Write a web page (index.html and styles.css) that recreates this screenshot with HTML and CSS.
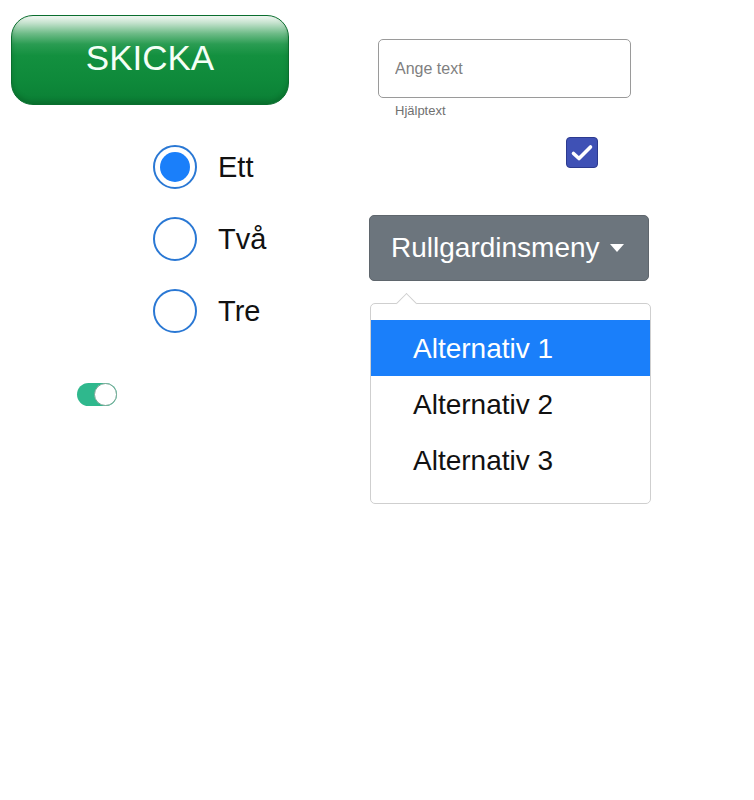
FILE: index.html
```html
<!DOCTYPE html>
<html lang="sv">

<head>
    <meta charset="UTF-8">
    <meta name="viewport" content="width=device-width, initial-scale=1.0">
    <title>Formulärkontroller</title>
    <link rel="stylesheet" href="styles.css">
</head>

<body>
    <div class="page">
        <!-- Left column: button, radios, switch -->
        <div class="col-left">
            <button class="send-btn">SKICKA</button>

            <div class="radio-group">
                <label class="radio-row">
                    <span class="radio checked"></span>
                    <span class="radio-label">Ett</span>
                </label>
                <label class="radio-row">
                    <span class="radio"></span>
                    <span class="radio-label">Två</span>
                </label>
                <label class="radio-row">
                    <span class="radio"></span>
                    <span class="radio-label">Tre</span>
                </label>
            </div>

            <div class="switch on">
                <span class="knob"></span>
            </div>
        </div>

        <!-- Right column: text field, checkbox, dropdown -->
        <div class="col-right">
            <div class="field">
                <input type="text" class="text-input" placeholder="Ange text">
                <div class="helper">Hjälptext</div>
            </div>

            <div class="check-wrap">
                <span class="checkbox">
                    <svg width="24" height="20" viewBox="0 0 24 20">
                        <path d="M3.5 10.5 L9 15.5 L20.5 4" fill="none" stroke="#fff" stroke-width="3.6" stroke-linecap="round" stroke-linejoin="round"/>
                    </svg>
                </span>
            </div>

            <button class="dropdown-btn">
                <span>Rullgardinsmeny</span>
                <span class="caret"></span>
            </button>

            <div class="dropdown-menu">
                <div class="menu-item active">Alternativ 1</div>
                <div class="menu-item">Alternativ 2</div>
                <div class="menu-item">Alternativ 3</div>
            </div>
        </div>
    </div>
</body>

</html>
```

FILE: styles.css
```css
body {
    font-family: "Liberation Sans", Arial, sans-serif;
    margin: 0;
    padding: 0;
    background-color: #ffffff;
    color: #111111;
}

.page {
    display: grid;
    grid-template-columns: 369px 1fr;
}

/* Left column */

.col-left {
    display: flex;
    flex-direction: column;
    align-items: flex-start;
}

.send-btn {
    margin: 15px 0 0 11px;
    width: 278px;
    height: 90px;
    border: 1px solid #0a6e2e;
    border-radius: 22px;
    background: linear-gradient(to bottom, #f2f8f3 0%, #c4e2cd 8%, #6dbb87 20%, #2a9c52 32%, #13903f 45%, #0e893a 75%, #0b7f35 100%);
    box-shadow: inset 0 -3px 4px rgba(0, 60, 20, 0.25);
    color: #f4fff6;
    font-family: "Liberation Sans", Arial, sans-serif;
    font-size: 35px;
    padding: 0 0 4px 0;
    cursor: pointer;
}

.radio-group {
    display: flex;
    flex-direction: column;
    gap: 28px;
    margin: 40px 0 0 153px;
}

.radio-row {
    display: flex;
    align-items: center;
    height: 44px;
}

.radio {
    width: 44px;
    height: 44px;
    box-sizing: border-box;
    border: 2px solid #2a78d4;
    border-radius: 50%;
    display: flex;
    align-items: center;
    justify-content: center;
}

.radio.checked::after {
    content: "";
    width: 30px;
    height: 30px;
    border-radius: 50%;
    background-color: #1a7ffa;
}

.radio-label {
    margin-left: 21px;
    font-size: 29px;
    color: #111111;
}

.switch {
    margin: 50px 0 0 77px;
    width: 40px;
    height: 23px;
    border-radius: 12px;
    background-color: #2fb88d;
    position: relative;
}

.switch .knob {
    position: absolute;
    top: 0;
    right: 0;
    width: 23px;
    height: 23px;
    box-sizing: border-box;
    border-radius: 50%;
    background-color: #ffffff;
    border: 1px solid #7aa695;
}

/* Right column */

.col-right {
    display: flex;
    flex-direction: column;
    align-items: flex-start;
}

.field {
    margin: 39px 0 0 9px;
}

.text-input {
    width: 253px;
    height: 59px;
    box-sizing: border-box;
    border: 1px solid #9a9a9a;
    border-radius: 5px;
    padding: 0 16px;
    font-family: "Liberation Sans", Arial, sans-serif;
    font-size: 16px;
    display: block;
}

.text-input::placeholder {
    color: #808080;
}

.helper {
    margin: 5px 0 0 17px;
    font-size: 13px;
    color: #707070;
}

.check-wrap {
    margin: 19px 0 0 197px;
}

.checkbox {
    width: 32px;
    height: 31px;
    box-sizing: border-box;
    border: 1px solid #2c3a8f;
    border-radius: 4px;
    background-color: #3f51b5;
    display: flex;
    align-items: center;
    justify-content: center;
}

.dropdown-btn {
    margin-top: 47px;
    width: 280px;
    height: 66px;
    border: 1px solid #5f666d;
    border-radius: 5px;
    background-color: #6c757d;
    color: #ffffff;
    font-family: "Liberation Sans", Arial, sans-serif;
    font-size: 28px;
    padding: 0 24px 0 21px;
    display: flex;
    align-items: center;
    justify-content: space-between;
    cursor: pointer;
}

.caret {
    width: 0;
    height: 0;
    border-left: 7px solid transparent;
    border-right: 7px solid transparent;
    border-top: 8px solid #ffffff;
}

/* Dropdown list with a small pointer on top */

.dropdown-menu {
    margin: 22px 0 0 1px;
    width: 281px;
    box-sizing: border-box;
    border: 1px solid #cfcfcf;
    border-radius: 5px;
    padding: 16px 0 15px 0;
    background-color: #ffffff;
    position: relative;
}

.dropdown-menu::before {
    content: "";
    position: absolute;
    top: -8px;
    left: 28px;
    width: 14px;
    height: 14px;
    background-color: #ffffff;
    border-left: 1px solid #cfcfcf;
    border-top: 1px solid #cfcfcf;
    transform: rotate(45deg);
}

.menu-item {
    height: 56px;
    display: flex;
    align-items: center;
    padding: 2px 0 0 42px;
    box-sizing: border-box;
    font-size: 28px;
    color: #111111;
    position: relative;
}

.menu-item.active {
    background-color: #1a7ffa;
    color: #ffffff;
}
```
